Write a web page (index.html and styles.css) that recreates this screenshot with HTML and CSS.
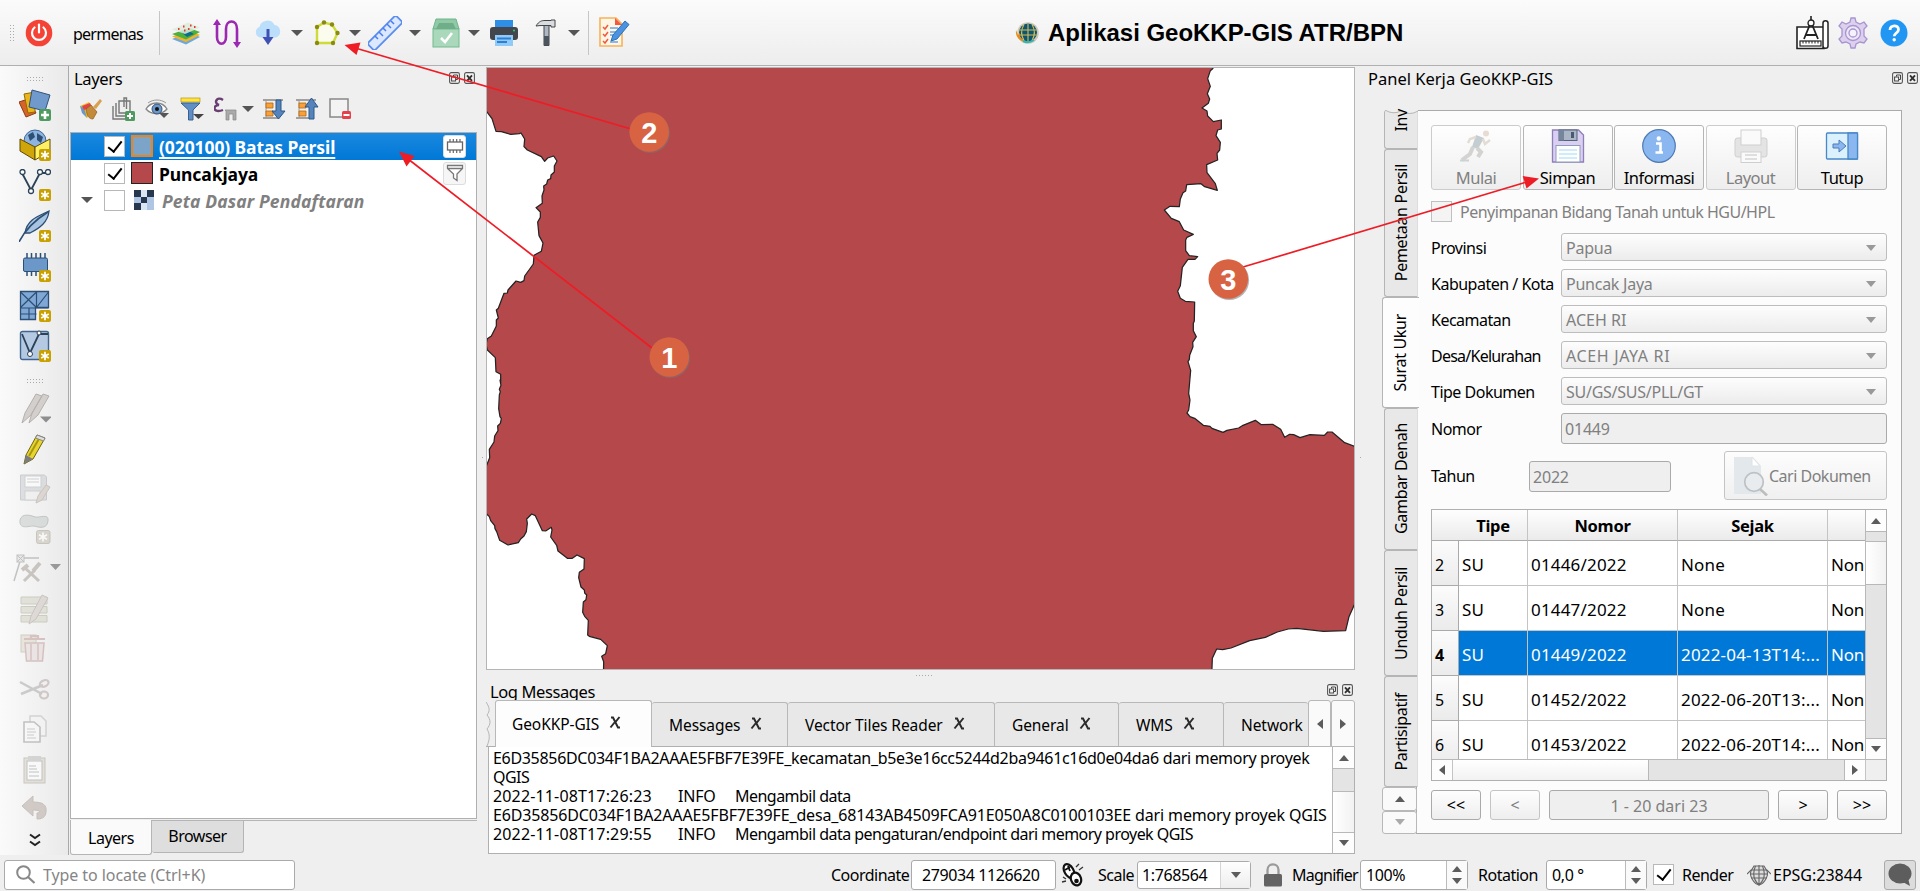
FILE: index.html
```
<!DOCTYPE html>
<html lang="id">
<head>
<meta charset="utf-8">
<title>Aplikasi GeoKKP-GIS ATR/BPN</title>
<link rel="stylesheet" href="styles.css">
</head>
<body>
<svg class="defs" width="0" height="0">
  <defs>
    <symbol id="float" viewBox="0 0 11 12"><rect x=".6" y=".6" width="9.8" height="10.8" rx="1.6" fill="#f4f4f4" stroke="#555" stroke-width="1.1"/><rect x="2.6" y="5" width="4" height="4" fill="none" stroke="#444"/><path d="M4.500 4.500V3h4v4.500H7" fill="none" stroke="#444"/></symbol>
    <symbol id="close" viewBox="0 0 11 12"><rect x=".6" y=".6" width="9.8" height="10.8" rx="1.6" fill="#f4f4f4" stroke="#555" stroke-width="1.1"/><path d="M3 3.300l5 5.500M8 3.300l-5 5.500" stroke="#333" stroke-width="1.900"/></symbol>
    <symbol id="star" viewBox="0 0 12 12"><rect width="12" height="12" rx="2" fill="#c8a000"/><path d="M6 1.800v8.400M2.200 4l7.600 4M9.800 4l-7.600 4" stroke="#fff" stroke-width="1.700"/></symbol>
    <symbol id="tabx" viewBox="0 0 12 13"><path d="M1.500 11.500L5.500 6.500M2 1.500h2l5 10h2M10.500 1L6.500 6" fill="none" stroke="#2b2b2b" stroke-width="2"/></symbol>
  </defs>
</svg>

<header class="topbar">
  <i class="grip-v"></i>
  <svg class="i-power" width="28" height="28" viewBox="0 0 28 28"><circle cx="14" cy="14" r="13.300" fill="#f44336"/><path d="M9.500 8.500a7 7 0 1 0 9 0" fill="none" stroke="#fff" stroke-width="2.200" stroke-linecap="round"/><path d="M14 5.500v8" stroke="#fff" stroke-width="2.200" stroke-linecap="round"/></svg>
  <span class="user">permenas</span>
  <i class="sep"></i>
  <svg class="i-map" width="30" height="24" viewBox="0 0 30 24"><path d="M1 18l14 5.500L29 16l-11-5z" fill="#6fa8dc"/><path d="M1 15.500l14 5.500 14-7-11-5z" fill="#f0b429"/><path d="M1 13l14 5.500 14-7.500-11-4z" fill="#4caf3e"/><path d="M10 11l8-1 5 3-7 3z" fill="#0d6e8c"/><path d="M1 8.500l13 4.500 15-6.500L17 1.500z" fill="#dcebdc" opacity=".85"/><path d="M7 8h1.500M12 5.500h1.500M17 8h1.500M19 4.500h1.500M23 6h1.500M13 9.500h1.500" stroke="#e23b2e" stroke-width="2"/></svg>
  <svg class="i-snake" width="30" height="30" viewBox="0 0 30 30"><path d="M5 5v14c0 9 9 9 9 0V11c0-10 11-10 11 0v14" fill="none" stroke="#9c27b0" stroke-width="2.600"/><path d="M1 7l4-6 4 6zM21 24h8l-4 6z" fill="#9c27b0"/></svg>
  <svg class="i-cloud" width="28" height="26" viewBox="0 0 28 26"><path d="M6 17.500a5.500 5.500 0 0 1-.5-10.500 8 8 0 0 1 15-2 6.500 6.500 0 0 1 1.500 12.500z" fill="#bbdefb"/><path d="M14 9v9" stroke="#3f51b5" stroke-width="3"/><path d="M8.500 17h11L14 25z" fill="#3f51b5"/></svg>
  <i class="dd"></i>
  <svg class="i-poly" width="26" height="26" viewBox="0 0 26 26"><path d="M3 23V7l7-4.500 8 2 5.500 8.500L19 23z" fill="#fbfbee" stroke="#cddc39" stroke-width="2.400"/><g fill="#8a8a10"><circle cx="3" cy="7" r="2.200"/><circle cx="10" cy="2.500" r="2.200"/><circle cx="18" cy="4.500" r="2.200"/><circle cx="23.500" cy="13" r="2.200"/><circle cx="19" cy="23" r="2.200"/><circle cx="3" cy="23" r="2.200"/></g></svg>
  <i class="dd"></i>
  <svg class="i-ruler" width="34" height="34" viewBox="0 0 34 34"><rect x="-3" y="12" width="40" height="10" rx="2" transform="rotate(-45 17 17)" fill="#dbe8ff" stroke="#5b8def" stroke-width="1.800"/><path d="M7 20l3 3M11 16l4 4M15 12l3 3M19 8l4 4M23 5l3 3" stroke="#4a7df0" stroke-width="1.500"/></svg>
  <i class="dd"></i>
  <svg class="i-box" width="28" height="30" viewBox="0 0 28 30"><path d="M4 1h20l3 10H1z" fill="#8fc9a6" stroke="#6fb58b"/><rect x="1" y="11" width="26" height="18" fill="#a9d8bb" stroke="#74b98f"/><path d="M4 11h20l-3-6H7z" fill="#6fae88"/><path d="M9 20l4 4 7-9" fill="none" stroke="#fff" stroke-width="2.600"/></svg>
  <i class="dd"></i>
  <svg class="i-print" width="28" height="26" viewBox="0 0 28 26"><rect x="5" y="0" width="18" height="9" fill="#2f8fe6"/><rect x="0" y="7" width="28" height="13" rx="3" fill="#43474d"/><circle cx="24" cy="10.500" r="1" fill="#29d07a"/><rect x="5" y="15" width="18" height="11" fill="#90caf9"/><path d="M7 18.500h14M7 22h10" stroke="#2f7fd0" stroke-width="1.800"/></svg>
  <svg class="i-hammer" width="22" height="28" viewBox="0 0 22 28"><path d="M9 6h5v20.500h-5z" fill="#aeb8c4" stroke="#444"/><path d="M9 17h5v9.500h-5z" fill="#4b5560"/><path d="M1 7c3-5 6-5.500 9-5.500h6V1h4v7h-4V6.500h-7c-3 0-5 0-8 .5z" fill="#d9dde2" stroke="#444"/></svg>
  <i class="dd"></i>
  <i class="sep"></i>
  <svg class="i-edit" width="31" height="31" viewBox="0 0 31 31"><path d="M1 1h16l6 6v22H1z" fill="#fff6e6" stroke="#f7b25a" stroke-width="1.600"/><path d="M16 1v7h7z" fill="#f2593f"/><path d="M4 10l2 2 3-4M4 17l2 2 3-4M4 24l2 2 3-4" fill="none" stroke="#f2593f" stroke-width="1.500"/><path d="M11 11h8M11 15h7M11 18h5M11 25h8" stroke="#6aa2e0" stroke-width="1.400"/><path d="M12 24l2-6L26 4l4 3.500L18 22z" fill="#4b93e0" stroke="#2d6fb8"/></svg>
  <div class="brand">
    <svg width="24" height="24" viewBox="0 0 24 24"><circle cx="13" cy="12" r="10.800" fill="#cfcbbb"/><circle cx="13" cy="11.500" r="9" fill="#0d5570"/><path d="M13 2.500v18M4.500 9h17M4.500 14h17M9 3.500c-3 5-3 11 0 16M17 3.500c3 5 3 11 0 16" fill="none" stroke="#d9bd52" stroke-width="1.100"/><path d="M1 9c-1 8 5 12 10 12-4-2-7-5-6-9l-2 2z" fill="#e98a1b"/><path d="M8 20c4 2 8 1 11-1" stroke="#36b5b0" stroke-width="2" fill="none"/></svg>
    <h1>Aplikasi GeoKKP-GIS ATR/BPN</h1>
  </div>
  <svg class="i-draft" width="33" height="34" viewBox="0 0 33 34"><path d="M1 11h27v21.500H1z" fill="#fff" stroke="#222" stroke-width="1.600"/><path d="M27 32.500V7c0-3 5-3 5 0v23c0 3-5 3-5 0" fill="#fff" stroke="#222" stroke-width="1.500"/><path d="M15 6L8 23M15 6l7 17M10 19h10" fill="none" stroke="#222" stroke-width="1.800"/><circle cx="15" cy="7" r="3" fill="#fff" stroke="#222" stroke-width="1.300"/><path d="M15 0v4" stroke="#222" stroke-width="1.600"/><rect x="4" y="25" width="21" height="5" fill="#fff" stroke="#222" stroke-width="1.200"/><path d="M7 25v2.500M10 25v2.500M13 25v2.500M16 25v2.500M19 25v2.500M22 25v2.500" stroke="#222"/></svg>
  <svg class="i-gear" width="30" height="32" viewBox="0 0 30 32"><path d="M13 1h4l1 4 4 2 4-2 3 4-3 3v7l3 3-3 4-4-1-4 2-1 4h-4l-1-4-4-2-4 1-3-4 3-3v-7L1 9l3-4 4 2 4-2z" fill="#dcd0ee" stroke="#a795cf" stroke-width="1.300"/><circle cx="15" cy="16" r="7.500" fill="#eee8f8" stroke="#a795cf" stroke-width="1.300"/><circle cx="15" cy="16" r="4" fill="#f6f2fc" stroke="#a795cf" stroke-width="1.300"/></svg>
  <svg class="i-help" width="28" height="28" viewBox="0 0 28 28"><circle cx="14" cy="14" r="13.500" fill="#2196f3"/><path d="M10 11c0-5.500 8.500-5.500 8.500-.5 0 3.500-4.300 3.500-4.300 6.800" fill="none" stroke="#fff" stroke-width="2.800"/><circle cx="14.200" cy="20.800" r="1.700" fill="#fff"/></svg>
</header>

<main class="work">
  <nav class="tools">
    <i class="grip-h"></i>
    <svg width="32" height="32" viewBox="0 0 32 32"><path d="M0 13l9-3 8 14-10 4z" fill="#d9622b" stroke="#8e3b14"/><path d="M5 5l11-2v20L9 24z" fill="#e8b61c" stroke="#8f6d00"/><path d="M13 1l18 5-5 16-16-4z" fill="#6f9acb" stroke="#32527a"/><rect x="20" y="20" width="12" height="12" rx="2" fill="#4e9a5f"/><path d="M26 22v8M22 26h8" stroke="#fff" stroke-width="2.600"/></svg>
    <svg width="32" height="32" viewBox="0 0 32 32"><circle cx="16" cy="12" r="11" fill="#8db3df" stroke="#3f6796"/><path d="M9 6l5-3 2 5-5 4zM18 4l6 4-2 6-4-3z" fill="#2d4e75"/><path d="M1 10l15 8v13L1 22z" fill="#d0a50a" stroke="#5f4a00"/><path d="M31 10l-15 8v13l15-9z" fill="#fff066" stroke="#5f4a00"/><use href="#star" x="20" y="20" width="12" height="12"/></svg>
    <svg width="32" height="32" viewBox="0 0 32 32"><path d="M3 4l9 17 9-17h8" fill="none" stroke="#2c4258" stroke-width="1.800"/><g fill="#fff" stroke="#2c4258" stroke-width="1.300"><circle cx="3.500" cy="3" r="2.500"/><circle cx="12" cy="22" r="2.500"/><circle cx="21" cy="3" r="2.500"/><circle cx="29" cy="3" r="2.500"/></g><use href="#star" x="20" y="20" width="12" height="12"/></svg>
    <svg width="32" height="32" viewBox="0 0 32 32"><path d="M6 23C8 9 20 6 30 1c-1 11-9 17-19 22z" fill="#a8c4e3" stroke="#2c4f74" stroke-width="1.300"/><path d="M0 32C6 20 16 10 29 2" fill="none" stroke="#2c4f74" stroke-width="1.600"/><use href="#star" x="20" y="20" width="12" height="12"/></svg>
    <svg width="32" height="32" viewBox="0 0 32 32"><path d="M8 3v5M12.500 3v5M17 3v5M21.500 3v5M26 3v5M8 21v5M12.500 21v5M17 21v5" stroke="#2c4f74" stroke-width="1.500"/><rect x="4.500" y="8" width="24" height="13.500" rx="1.500" fill="#6b97c9" stroke="#2c4f74"/><use href="#star" x="20" y="20" width="12" height="12"/></svg>
    <svg width="32" height="32" viewBox="0 0 32 32"><path d="M1.500 1.500h28v16h-13v12h-15z" fill="#80a8d6" stroke="#2c4f74" stroke-width="1.300"/><path d="M1.500 18h28M17.500 1.500v16M1.500 2l16 15.500M17.500 2l-16 15.500M29.500 2l-12 15.500M10 18v11.500M1.500 24h16" stroke="#2c4f74" stroke-width="1.200"/><use href="#star" x="20" y="20" width="12" height="12"/></svg>
    <svg width="32" height="32" viewBox="0 0 32 32"><rect x="1.500" y="1.500" width="28" height="28" rx="2" fill="#b5cae2" stroke="#41658e" stroke-width="1.400"/><path d="M3 4l8 19 9-19h9" fill="none" stroke="#2c4258" stroke-width="1.800"/><circle cx="11" cy="24" r="2.500" fill="#fff" stroke="#2c4258"/><circle cx="20" cy="3" r="2" fill="#fff" stroke="#2c4258"/><use href="#star" x="20" y="20" width="12" height="12"/></svg>
    <i class="grip-h second"></i>
    <svg class="pencils" width="32" height="32" viewBox="0 0 32 32"><path d="M3 31l3-10L17 2l6 2-11 19zM10 31l3-10L24 2l6 2-11 19z" fill="#d3cfcc" stroke="#b5b0ac"/><path d="M21 24.500h12l-6 6z" fill="#8e8e8e"/></svg>
    <svg width="32" height="32" viewBox="0 0 32 32"><path d="M5 31l2-9L18 2l8 3-12 21z" fill="#e8d42e" stroke="#6b6210"/><path d="M10 23L21 4" stroke="#a99713" stroke-width="2"/><path d="M5 31l2-9 7 4z" fill="#7d7d7d"/><path d="M18 2l8 3-1.500 3-8-3z" fill="#ddd" stroke="#888"/></svg>
    <svg class="off" width="32" height="32" viewBox="0 0 32 32"><path d="M1.500 2h24l2 2v23h-26z" fill="#c9cdd1" stroke="#a9adb1"/><rect x="6" y="3" width="16" height="11" fill="#fff" stroke="#b5b5b5"/><path d="M8 6h12M8 9h12" stroke="#b5b5b5"/><rect x="6" y="18" width="15" height="9" fill="#eee" stroke="#b5b5b5"/><path d="M17 30l2-7 8-11 4 2-8 13z" fill="#ccc0b8" stroke="#aaa099"/></svg>
    <svg class="off" width="32" height="32" viewBox="0 0 32 32"><path d="M1 7c2-7 10-5 15-3 5 1 14-4 13 4-1 9-10 6-14 5-6 0-15 4-14-6z" fill="#c4cbc8" stroke="#9aa09d"/><rect x="17.500" y="17.500" width="13.500" height="13" rx="2" fill="#c3bfb0" stroke="#a5a194"/><path d="M24 19.500v9M20 21.700l8 4.600M28 21.700l-8 4.600" stroke="#fff" stroke-width="1.700"/></svg>
    <svg class="off node" width="48" height="32" viewBox="0 0 48 32"><path d="M1 28L8 5h18" fill="none" stroke="#999" stroke-width="1.500"/><rect x="4" y="2" width="7" height="7" fill="#ddd" stroke="#999"/><path d="M4 2l7 7M11 2l-7 7" stroke="#999"/><path d="M11 28l11-11M12 15l14 13" stroke="#a69f97" stroke-width="3"/><path d="M20 18l7-8M9 17l6-5" stroke="#a69f97" stroke-width="4"/><path d="M37 11h11l-5.500 6z" fill="#555"/></svg>
    <svg class="off" width="32" height="32" viewBox="0 0 32 32"><path d="M2 4h26v7H2zM2 13.500h26v6.500H2zM2 22.500h26v6.500H2z" fill="#d3d3c3" stroke="#aeae9c"/><path d="M10 31l2-8L23 2l6 3-12 21z" fill="#cfc6c0" stroke="#a79f99"/></svg>
    <svg class="off" width="32" height="32" viewBox="0 0 32 32"><rect x="2" y="2" width="15" height="17" fill="#dcd9c8" stroke="#b3b09c"/><path d="M5 6h21M12 6V3h7v3" fill="none" stroke="#c39a9a" stroke-width="2.200"/><path d="M6 10h19l-1.500 18h-16z" fill="#e6d9d9" stroke="#bf9a9a" stroke-width="1.500"/><path d="M12 11v16M19 11v16" stroke="#bf9a9a" stroke-width="1.500"/></svg>
    <svg class="off" width="32" height="32" viewBox="0 0 32 32"><path d="M1 8l22 12M2 20l22-9" stroke="#aaa" stroke-width="2.500"/><ellipse cx="25" cy="9.500" rx="4.500" ry="3" transform="rotate(-25 25 9)" fill="none" stroke="#b9a5a5" stroke-width="2.200"/><ellipse cx="25" cy="21" rx="4" ry="3.500" fill="none" stroke="#b9a5a5" stroke-width="2.200"/></svg>
    <svg class="off" width="32" height="32" viewBox="0 0 32 32"><path d="M11 2h11l5 5v15H11z" fill="#f4f4f4" stroke="#bbb" stroke-width="1.500"/><path d="M5 8h10l6 5v15H5z" fill="#fafafa" stroke="#999" stroke-width="1.600"/><path d="M8 15h8M8 18h9M8 21h7M8 24h9" stroke="#aaa"/></svg>
    <svg class="off" width="32" height="32" viewBox="0 0 32 32"><rect x="5" y="4" width="21" height="25" fill="#d6d2c6" stroke="#a8a498"/><rect x="8" y="7" width="15" height="19" fill="#fff" stroke="#999"/><rect x="9" y="2" width="13" height="5" fill="#bbb"/><path d="M10 12h7M10 15h8M10 18h10M10 22h10" stroke="#999"/></svg>
    <svg class="off" width="32" height="32" viewBox="0 0 32 32"><path d="M3 12L14 2v6c10 0 14 3 13 10-.5 6-5 7-9 7v-6c4 0 4-3-4-3v6z" fill="#b6aaa2" stroke="#a3978f"/></svg>
    <svg class="more" width="12" height="14" viewBox="0 0 12 14"><path d="M1 1.500l5 3.500 5-3.500M1 8.500l5 3.500 5-3.500" fill="none" stroke="#222" stroke-width="2"/></svg>
  </nav>

  <section class="layers">
    <div class="dock-title"><span>Layers</span><b class="dock-btns"><svg width="11" height="12"><use href="#float"/></svg><svg width="11" height="12"><use href="#close"/></svg></b></div>
    <div class="layer-tools">
      <svg width="23" height="24" viewBox="0 0 23 24"><path d="M1 9l9-4 5 8-7 8z" fill="#f1c21b"/><path d="M1 9l4 2 3 10-5-5z" fill="#6b97c9"/><path d="M3 9l8-3 2 4-8 3z" fill="#e5414a"/><path d="M7 12l5-4 6 7-4 7c-4 0-6-3-7-10z" fill="#c38a3a" stroke="#8b5d1c" stroke-width=".7"/><path d="M14 10l7-8 2 2-6 8z" fill="#d9a050"/></svg>
      <svg width="23" height="24" viewBox="0 0 23 24"><path d="M1 9v13h13M4 6v13h13M7 4h11v12H7zM12 10V1h2.500v11" fill="none" stroke="#777" stroke-width="1.400"/><rect x="13" y="14" width="10" height="10" rx="1.500" fill="#4e9a5f"/><path d="M18 16v6M15 19h6" stroke="#fff" stroke-width="2"/></svg>
      <svg width="25" height="24" viewBox="0 0 25 24"><path d="M1 12C6 4 17 4 22 12c-5 6-16 6-21 0z" fill="#fff" stroke="#888" stroke-width="1.300"/><circle cx="12" cy="12" r="5" fill="#6b97c9" stroke="#34557c"/><circle cx="12" cy="12" r="2" fill="#111"/><path d="M3 6C8 2 16 2 21 6" stroke="#999" fill="none"/><path d="M14 16h10l-5 5z" fill="#555"/></svg>
      <svg width="24" height="24" viewBox="0 0 24 24"><rect x="1" y="1" width="19" height="4" fill="#ffe14a" stroke="#b79a00" stroke-width=".7"/><path d="M1 6h19l-7 7v10H8.500V13z" fill="#5f8fc6" stroke="#36628f"/><path d="M13 17h11l-5.500 5z" fill="#444"/></svg>
      <svg width="23" height="25" viewBox="0 0 23 25"><path d="M9 3C3-1-1 6 5 8-2 8-1 17 9 13" fill="none" stroke="#6a3e73" stroke-width="2.400"/><path d="M11 13h11v10h-3v-6h-4v6h-3v-9z" fill="#aaa" stroke="#888" stroke-width=".7"/></svg>
      <i class="dd small"></i>
      <svg width="23" height="24" viewBox="0 0 23 24"><path d="M0 3h20M0 21h16" stroke="#888" stroke-width="1.500"/><path d="M3 3v18" stroke="#999"/><path d="M3 6h7v5H3zM3 14h7v5H3z" fill="#f6a13a" stroke="#b9650d" stroke-width=".8"/><path d="M13 3h5v11h4l-6.500 8L9 14h4z" fill="#5584bd" stroke="#2d5688"/></svg>
      <svg width="23" height="24" viewBox="0 0 23 24"><path d="M0 3h20M0 21h16" stroke="#888" stroke-width="1.500"/><path d="M3 3v18" stroke="#999"/><path d="M3 6h7v5H3zM3 14h7v5H3z" fill="#f6a13a" stroke="#b9650d" stroke-width=".8"/><path d="M13 22h5V10h4l-6.500-9L9 10h4z" fill="#5584bd" stroke="#2d5688"/></svg>
      <svg width="22" height="24" viewBox="0 0 22 24"><rect x="1" y="2" width="18" height="18" fill="#f3f3f3" stroke="#888" stroke-width="1.500"/><rect x="13" y="14" width="9" height="8" rx="1.500" fill="#e3414d"/><path d="M14.500 18h6" stroke="#fff" stroke-width="2"/></svg>
    </div>
    <div class="tree">
      <div class="row sel"><i class="exp"></i><i class="chk on"></i><i class="sw blue"></i><span>(020100) Batas Persil</span><b class="badge on"><svg width="18" height="18" viewBox="0 0 18 18"><path d="M4 2v3M7.300 2v3M10.700 2v3M14 2v3M4 13v3M7.300 13v3M10.700 13v3M14 13v3" stroke="#666" stroke-width="1.200"/><rect x="1.500" y="5" width="15" height="8" fill="#fff" stroke="#666" stroke-width="1.300"/></svg></b></div>
      <div class="row"><i class="exp"></i><i class="chk on"></i><i class="sw red"></i><span>Puncakjaya</span><b class="badge"><svg width="18" height="18" viewBox="0 0 18 18"><path d="M1.500 1.500h15v3L11 10v6.500L7.500 14v-4L1.500 4.500zM1.500 4.500h15" fill="#fff" stroke="#777" stroke-width="1.300"/></svg></b></div>
      <div class="row group"><i class="exp open"></i><i class="chk"></i><svg class="tiles" width="20" height="20" viewBox="0 0 20 20"><path fill="#aec6e3" d="M0 0h20v20H0z"/><path fill="#27374f" d="M0 0h7v7H0zM13 0h7v7h-7zM7 7h6v6H7zM0 13h7v7H0z"/><path fill="#dbe6f3" d="M7 0h6v7H7zM7 13h6v7H7z"/></svg><span>Peta Dasar Pendaftaran</span></div>
    </div>
    <div class="dock-tabs"><span class="t on">Layers</span><span class="t">Browser</span></div>
  </section>

  <i class="split-v"></i>

  <section class="center">
    <div class="canvas">
      <svg width="867" height="601" viewBox="487 68 867 601">
        <g fill="#fff" stroke="#232323" stroke-width="3.700" stroke-linejoin="round">
          <polygon transform="translate(480 60) scale(.33333)" points="0,140 20,155 36,176 48,214 64,215 92,223 118,221 123,219 134,237 132,260 142,270 184,290 194,304 203,294 221,288 231,303 223,318 223,336 213,345 212,356 203,360 200,372 191,378 192,390 186,408 187,430 168,443 181,456 181,472 173,486 177,527 189,549 184,574 162,586 160,612 134,648 132,662 122,667 108,663 84,690 82,699 72,700 55,745 49,750 55,774 49,780 49,798 34,828 22,836 18,853 22,870 46,893 48,935 62,943 62,972 60,960 63,976 58,988 61,995 58,1005 56,1046 60,1070 64,1076 61,1090 53,1098 54,1112 44,1128 42,1146 28,1168 29,1193 20,1216 0,1230"/>
          <polygon transform="translate(480 380) scale(.33333)" points="0,385 20,402 28,410 32,422 44,437 45,446 50,455 59,481 84,495 115,488 122,477 132,468 139,455 142,430 140,417 155,402 166,407 187,452 197,453 214,442 216,450 212,471 230,496 234,513 262,535 277,535 291,525 313,536 312,567 298,577 296,593 303,621 313,630 314,639 320,645 318,659 310,666 308,697 314,709 325,721 323,765 328,769 362,778 382,797 377,821 365,829 371,845 370,900 0,900"/>
          <polygon transform="translate(1000 0) scale(.33333)" points="648,190 638,206 631,212 623,236 631,259 622,281 629,297 625,310 606,324 621,333 623,348 640,365 664,360 664,387 653,390 648,407 661,427 659,450 651,460 653,480 620,494 621,518 646,551 652,571 614,560 603,551 560,554 557,573 549,578 541,597 538,620 510,619 493,630 514,655 538,665 551,690 580,703 561,712 557,720 557,752 568,767 593,770 585,778 564,778 547,802 541,857 533,874 541,895 556,904 584,906 583,963 580,970 580,992 589,1010 578,1027 579,1040 569,1066 568,1078 564,1085 572,1111 566,1180 570,1200 566,1230 561,1239 570,1250 584,1255 610,1276 630,1279 636,1285 669,1297 681,1291 716,1284 729,1276 766,1261 784,1274 818,1273 842,1288 854,1312 869,1303 881,1304 900,1313 930,1304 973,1306 983,1296 996,1296 1034,1328 1070,1341 1100,1341 1100,190"/>
          <polygon transform="translate(1150 330) scale(.33333)" points="640,780 613,824 597,860 587,902 520,904 440,895 415,897 382,906 346,922 299,932 243,954 218,959 200,957 187,985 185,1040 660,1040"/>
        </g>
      </svg>
    </div>
    <i class="split-h"></i>
    <div class="dock-title log"><span>Log Messages</span><b class="dock-btns"><svg width="11" height="12"><use href="#float"/></svg><svg width="11" height="12"><use href="#close"/></svg></b></div>
    <div class="log-tabs">
      <svg class="torn" width="9" height="44" viewBox="0 0 9 44"><path d="M0 0c4 6 4 9 1 13 4 5 4 9 0 14 3 5 3 10 0 17" fill="none" stroke="#b5b5b5"/></svg>
      <span class="lt on w1">GeoKKP-GIS<svg width="12" height="13"><use href="#tabx"/></svg></span>
      <span class="lt w2">Messages<svg width="12" height="13"><use href="#tabx"/></svg></span>
      <span class="lt w3">Vector Tiles Reader<svg width="12" height="13"><use href="#tabx"/></svg></span>
      <span class="lt w4">General<svg width="12" height="13"><use href="#tabx"/></svg></span>
      <span class="lt w5">WMS<svg width="12" height="13"><use href="#tabx"/></svg></span>
      <span class="lt w6">Network</span>
      <span class="sb"><i class="ar left"></i></span><span class="sb"><i class="ar right"></i></span>
    </div>
    <div class="log-body">
      <div class="log-text">
        <p class="k1">E6D35856DC034F1BA2AAAE5FBF7E39FE_kecamatan_b5e3e16cc5244d2ba9461c16d0e04da6 dari memory proyek</p>
        <p>QGIS</p>
        <p><span class="ts">2022-11-08T17:26:23</span><span class="lv">INFO</span>Mengambil data</p>
        <p class="k2">E6D35856DC034F1BA2AAAE5FBF7E39FE_desa_68143AB4509FCA91E050A8C0100103EE dari memory proyek QGIS</p>
        <p><span class="ts">2022-11-08T17:29:55</span><span class="lv">INFO</span>Mengambil data pengaturan/endpoint dari memory proyek QGIS</p>
      </div>
      <div class="vbar"><b><i class="ar up"></i></b><s></s><u></u><b><i class="ar down"></i></b></div>
    </div>
  </section>

  <i class="split-v right"></i>

  <section class="panel">
    <div class="dock-title"><span>Panel Kerja GeoKKP-GIS</span><b class="dock-btns"><svg width="11" height="12"><use href="#float"/></svg><svg width="11" height="12"><use href="#close"/></svg></b></div>
    <div class="panel-body">
      <div class="side-tabs">
        <div class="st h1"><svg class="wave" width="33" height="5" viewBox="0 0 33 5"><path d="M0 0q8 5 16 1q9 5 17 0V0z" fill="#efefef"/><path d="M0 0q8 5 16 1q9 5 17 0" fill="none" stroke="#b5b5b5"/></svg><span>Inv</span></div>
        <div class="st h2"><span>Pemetaan Persil</span></div>
        <div class="st h3 on"><span>Surat Ukur</span></div>
        <div class="st h4"><span>Gambar Denah</span></div>
        <div class="st h5"><span>Unduh Persil</span></div>
        <div class="st h6"><span>Partisipatif</span></div>
        <div class="tb"><i class="ar up"></i></div>
        <div class="tb dim"><i class="ar down"></i></div>
      </div>
      <div class="frame">
        <div class="actions">
          <button class="act dim"><svg width="34" height="34" viewBox="0 0 34 34"><circle cx="27" cy="4.500" r="3" fill="#e6dcd2"/><path d="M17 6l8 3-6 11-6-2z" fill="#c4cdd0"/><path d="M17 8l-6 2-2 4M24 10l2 5 5-4" fill="none" stroke="#e2dcd5" stroke-width="2.500"/><path d="M14 18l-3 7-8 6M18 19l4 4-3 5" fill="none" stroke="#d3d3d2" stroke-width="4"/><path d="M1 31.500h9" stroke="#cdd3d5" stroke-width="2"/></svg><span>Mulai</span></button>
          <button class="act"><svg width="34" height="34" viewBox="0 0 34 34"><path d="M1.500 1h26l5 5v27h-31z" fill="#d9cff0" stroke="#8f7fb8" stroke-width="1.300"/><rect x="8" y="1" width="18" height="10.500" fill="#aab6c6" stroke="#55657c"/><path d="M8 1h5v10.500H8z" fill="#75859c"/><rect x="20" y="3" width="3" height="6" fill="#4a5870"/><rect x="5" y="16.500" width="24" height="16.500" fill="#fff" stroke="#8f9cc0"/><path d="M8 21h18M8 25h18M8 29h18" stroke="#bfe6fb" stroke-width="1.600"/></svg><span>Simpan</span></button>
          <button class="act"><svg width="34" height="34" viewBox="0 0 34 34"><circle cx="17" cy="17" r="16.300" fill="#8bb7f0" stroke="#4e7ab5" stroke-width="1.200"/><path d="M14 14.500h4.500v9H21M13.500 23.500h7" stroke="#fff" stroke-width="2.600" fill="none"/><circle cx="16.800" cy="9.500" r="2.200" fill="#fff"/></svg><span>Informasi</span></button>
          <button class="act dim"><svg width="34" height="34" viewBox="0 0 34 34"><rect x="1" y="9" width="32" height="19" rx="2.500" fill="#e4e4e4" stroke="#cfcfcf"/><rect x="7" y="1" width="20" height="15" fill="#fafafa" stroke="#cfcfcf"/><rect x="7" y="23" width="20" height="10.500" fill="#fafafa" stroke="#cfcfcf"/><path d="M11 26h12M11 30h12" stroke="#d5d5d5" stroke-width="1.300"/></svg><span>Layout</span></button>
          <button class="act"><svg width="34" height="34" viewBox="0 0 34 34"><rect x="1.500" y="4" width="31" height="26" rx="1" fill="#dcf1fe" stroke="#4788c7" stroke-width="1.300"/><path d="M23 4h9.500v26H23z" fill="#8bb7f0" stroke="#4788c7" stroke-width="1.300"/><path d="M8 15h6v-4l7 6-7 6v-4H8z" fill="#8bb7f0" stroke="#4e7ab5"/></svg><span>Tutup</span></button>
        </div>
        <label class="hgu"><i class="cb"></i><span>Penyimpanan Bidang Tanah untuk HGU/HPL</span></label>
        <div class="field"><span>Provinsi</span><div class="combo">Papua<i class="ar down"></i></div></div>
        <div class="field"><span>Kabupaten / Kota</span><div class="combo">Puncak Jaya<i class="ar down"></i></div></div>
        <div class="field"><span>Kecamatan</span><div class="combo c-kec">ACEH RI<i class="ar down"></i></div></div>
        <div class="field"><span class="f-desa">Desa/Kelurahan</span><div class="combo c-desa">ACEH JAYA RI<i class="ar down"></i></div></div>
        <div class="field"><span>Tipe Dokumen</span><div class="combo">SU/GS/SUS/PLL/GT<i class="ar down"></i></div></div>
        <div class="field nomor"><span>Nomor</span><div class="inp">01449</div></div>
        <div class="tahun"><span>Tahun</span><div class="inp">2022</div><button class="cari"><svg width="36" height="40" viewBox="0 0 36 40"><path d="M1 1h19l8 9v28H1z" fill="#e3e8ec"/><path d="M19 1v9h8z" fill="#fff" stroke="#dde3e8"/><circle cx="21" cy="26" r="9.300" fill="#e8ecef" stroke="#bdc1c4" stroke-width="1.700"/><path d="M27 33l7 6.500" stroke="#bdbdbd" stroke-width="2.600"/></svg>Cari Dokumen</button></div>
        <div class="grid">
          <div class="gmain">
            <div class="tr th"><b class="c1">Tipe</b><b class="c2">Nomor</b><b class="c3">Sejak</b><b class="c4"></b></div>
            <div class="tr"><i>2</i><span class="c1">SU</span><span class="c2">01446/2022</span><span class="c3">None</span><span class="c4">Non</span></div>
            <div class="tr"><i>3</i><span class="c1">SU</span><span class="c2">01447/2022</span><span class="c3">None</span><span class="c4">Non</span></div>
            <div class="tr sel"><i>4</i><span class="c1">SU</span><span class="c2">01449/2022</span><span class="c3">2022-04-13T14:...</span><span class="c4">Non</span></div>
            <div class="tr"><i>5</i><span class="c1">SU</span><span class="c2">01452/2022</span><span class="c3">2022-06-20T13:...</span><span class="c4">Non</span></div>
            <div class="tr"><i>6</i><span class="c1">SU</span><span class="c2">01453/2022</span><span class="c3">2022-06-20T14:...</span><span class="c4">Non</span></div>
          </div>
          <div class="vbar"><b><i class="ar up"></i></b><s></s><u></u><s class="rest"></s><b><i class="ar down"></i></b></div>
          <div class="hbar"><b><i class="ar left"></i></b><u></u><s></s><b><i class="ar right"></i></b></div>
        </div>
        <div class="pager"><button>&lt;&lt;</button><button class="dim">&lt;</button><div class="inp">1 - 20 dari 23</div><button>&gt;</button><button>&gt;&gt;</button></div>
      </div>
    </div>
  </section>
</main>

<footer class="status">
  <div class="locate"><svg width="20" height="20" viewBox="0 0 20 20"><circle cx="7.500" cy="7.500" r="6.300" fill="none" stroke="#888" stroke-width="2"/><path d="M12 12l6.500 6" stroke="#888" stroke-width="2.200"/></svg>Type to locate (Ctrl+K)</div>
  <span class="l-coord">Coordinate</span>
  <div class="box coord">279034 1126620</div>
  <svg class="i-toggle" width="24" height="24" viewBox="0 0 24 24"><ellipse cx="8" cy="8" rx="4.500" ry="7.500" transform="rotate(-30 8 8)" fill="#fff" stroke="#111" stroke-width="2.200"/><path d="M4 7l5-3M7 3l2 5" stroke="#111" stroke-width="1.800"/><ellipse cx="15" cy="16" rx="5" ry="6.500" transform="rotate(-20 15 16)" fill="#fff" stroke="#111" stroke-width="2.200"/><circle cx="15.500" cy="18" r="2.300" fill="#111"/><path d="M2 14l3 2M1 19l4-1M15 4l3-3M18 7l4-3" stroke="#333" stroke-width="1.300"/></svg>
  <span class="l-scale">Scale</span>
  <div class="box scale"><span>1:768564</span><b><i class="ar down"></i></b></div>
  <svg class="i-lock" width="20" height="24" viewBox="0 0 20 24"><path d="M4.500 12V7c0-7.500 11-7.500 11 0v5" fill="none" stroke="#9a9a9a" stroke-width="2.300"/><rect x="1" y="11" width="18" height="12.500" rx="1.500" fill="#636363"/></svg>
  <span class="l-mag">Magnifier</span>
  <div class="box spin m"><span>100%</span><b><i class="ar up"></i><i class="ar down"></i></b></div>
  <span class="l-rot">Rotation</span>
  <div class="box spin r"><span>0,0 °</span><b><i class="ar up"></i><i class="ar down"></i></b></div>
  <i class="chk on"></i>
  <span class="l-ren">Render</span>
  <svg class="i-globe" width="24" height="22" viewBox="0 0 24 22"><path d="M7 2h10l3 5c2 5-3 13-8 14C7 20 2 12 4 7z" fill="#ddd" stroke="#666" stroke-width="1.100"/><path d="M0 10l4-4h16l4 4M3 10h18M4 14h16M12 1v20M8.500 2c-3 7-2 14 3.500 19 5.500-5 6.500-12 3.500-19" fill="none" stroke="#666" stroke-width="1.100"/></svg>
  <span class="l-epsg">EPSG:23844</span>
  <div class="msg"><svg width="24" height="24" viewBox="0 0 24 24"><ellipse cx="12" cy="10.500" rx="11.500" ry="10" fill="#5d5d5d"/><path d="M13 18l7-3 2 8z" fill="#5d5d5d"/></svg></div>
</footer>

<svg class="notes" width="1920" height="891" viewBox="0 0 1920 891">
  <g stroke="#ee1c25" stroke-width="1.700"><path d="M631 129L357 48.500"/><path d="M652 348L410 160.500"/><path d="M1243 267L1525 182.500"/></g>
  <g fill="#ee1c25"><path d="M344.500 45l16-2.500-4 12.500z"/><path d="M399 151.500l15.500 4.500-8 10.500z"/><path d="M1539 178.500l-12.500 10-3.800-12.500z"/></g>
  <g fill="#777" opacity=".55"><circle cx="670.300" cy="358.300" r="19.800"/><circle cx="650.300" cy="133.300" r="19.800"/><circle cx="1229.300" cy="280.300" r="19.800"/></g>
  <g fill="#d86343"><circle cx="669.300" cy="357" r="19.800"/><circle cx="649.200" cy="132" r="19.800"/><circle cx="1228.300" cy="279" r="19.800"/></g>
  <g class="num"><text x="669.300" y="367.500">1</text><text x="649.200" y="142.500">2</text><text x="1228.300" y="289.500">3</text></g>
</svg>
</body>
</html>
```
FILE: styles.css
```
* { box-sizing: border-box; }
body {
  margin: 0; width: 1920px; height: 891px; overflow: hidden; position: relative;
  display: flex; flex-direction: column; background: #efefef; color: #000;
  font: 16px/20px "Noto Sans", "DejaVu Sans Condensed", sans-serif; letter-spacing: -0.5px; white-space: nowrap;
}
i, b, s, u { display: block; font-style: normal; text-decoration: none; flex: none; }
svg { display: block; flex: none; }
p { margin: 0; }
button { font: inherit; letter-spacing: inherit; color: inherit; padding: 0; margin: 0; }
.defs { position: absolute; }

/* shared arrows */
.ar { width: 0; height: 0; border: 0 solid transparent; }
.ar.down { border-width: 6px 5.500px 0; border-top-color: #5c5c5c; }
.ar.up { border-width: 0 5.500px 6px; border-bottom-color: #5c5c5c; }
.ar.left { border-width: 5.500px 6px 5.500px 0; border-right-color: #5c5c5c; }
.ar.right { border-width: 5.500px 0 5.500px 6px; border-left-color: #5c5c5c; }
.dd { width: 0; height: 0; border: 6px solid transparent; border-top-color: #555; border-bottom: 0; }

/* top bar */
.topbar { height: 66px; flex: none; display: flex; align-items: center; padding-left: 9px; background: linear-gradient(#fbfbfb, #ededed); border-bottom: 1px solid #b0b0b0; }
.topbar .grip-v { width: 5px; height: 18px; background: radial-gradient(circle, #aaa 0.700px, transparent 1px) 0 0/3px 3px; }
.sep { width: 1px; height: 44px; background: #c6c6c6; }
.i-power { margin-left: 11px; }
.user { margin: 3px 0 0 20px; width: 86px; letter-spacing: -0.750px; }
.i-map { margin-left: 11px; }
.i-snake { margin-left: 11px; }
.i-cloud { margin-left: 12px; }
.i-cloud + .dd { margin-left: 9px; }
.i-poly { margin-left: 11px; }
.i-poly + .dd { margin-left: 9px; }
.i-ruler { margin-left: 7px; }
.i-ruler + .dd { margin-left: 7px; }
.i-box { margin-left: 11px; }
.i-box + .dd { margin-left: 8px; }
.i-print { margin-left: 10px; }
.i-hammer { margin-left: 17px; }
.i-hammer + .dd { margin-left: 11px; }
.i-hammer ~ .sep { margin-left: 8px; }
.i-edit { margin-left: 10px; }
.brand { margin-left: 385px; width: 781px; display: flex; align-items: center; gap: 9px; }
.brand h1 { margin: 0; font: bold 24px/30px "Liberation Sans", Arial, sans-serif; letter-spacing: -0.030px; }
.i-gear { margin-left: 9px; }
.i-help { margin-left: 12px; }

.work { height: 789px; flex: none; display: flex; }

/* vertical toolbar */
.tools { width: 69px; height: 789px; border-right: 1px solid #aaa; background: linear-gradient(90deg, #fafafa, #eaeaea); display: flex; flex-direction: column; align-items: center; gap: 8px; padding: 10px 0 0 2px; }
.tools svg { height: 32px; margin-bottom: 0.200px; }
.grip-h { width: 18px; height: 5px; background: radial-gradient(circle, #aaa 0.700px, transparent 1px) 0 0/3px 3px; }
.grip-h.second { margin: 8px 0 1px; }
.off { opacity: .55; }
.node { margin-left: 4px; }
.tools .more { height: 14px; margin-top: -1px; }

/* docks */
.dock-title { height: 27px; display: flex; align-items: center; justify-content: space-between; font-size: 16.500px; padding-left: 5px; }
.dock-title span { line-height: 22px; }
.dock-btns { display: flex; gap: 4px; margin-top: -2px; }
.layers { width: 408px; height: 789px; padding-left: 1px; display: flex; flex-direction: column; }
.layers .dock-title { padding: 0 2px 1px 4px; letter-spacing: -0.350px; }
.layer-tools { height: 39px; display: flex; align-items: center; padding: 0 0 6px 9px; gap: 9.900px; }
.dd.small { border-width: 6px 6px 0; margin-left: -4px; margin-right: -1px; }
.tree { height: 688px; background: #fff; border: 1px solid #b0b0b0; }
.row { height: 27px; display: flex; align-items: center; padding: 0 10px 0 10px; font-weight: bold; }
.row.sel { background: linear-gradient(#1a88de, #0078d7); color: #fff; }
.row.sel span { text-decoration: underline; text-decoration-thickness: 1.500px; text-underline-offset: 3px; }
.exp { width: 23px; }
.exp.open { width: 0; height: 0; border: 6px solid transparent; border-top-color: #555; border-bottom: 0; margin-right: 11px; }
.chk { width: 21px; height: 21px; border: 1px solid #b8b8b8; background: #fff; position: relative; flex: none; }
.chk.on::after { content: ""; position: absolute; left: 6px; top: 1px; width: 6px; height: 12px; border: solid #000; border-width: 0 2.500px 2.500px 0; transform: rotate(38deg); }
.sw { width: 22px; height: 22px; margin-left: 6px; }
.sw.blue { background: #7ca3c8; border: 2px solid #f5820f; }
.sw.red { background: #b5484b; border: 1px solid #232323; }
.row span { margin-left: 6px; flex: 1; letter-spacing: -0.100px; font-size: 17.500px; padding-top: 1px; }
.row.group span { font-style: italic; color: #808080; margin-left: 8px; letter-spacing: 0.150px; }
.tiles { margin-left: 9px; }
.badge { width: 23px; height: 23px; border: 1px solid #ddd; border-radius: 3px; background: #f6f6f6; display: flex; align-items: center; justify-content: center; }
.badge.on { background: #fff; }
.dock-tabs { height: 35px; margin-top: 1px; display: flex; align-items: flex-start; border-top: 1px solid #b5b5b5; }
.dock-tabs .t { height: 32px; width: 92px; border: 1px solid #b5b5b5; border-width: 0 1px 1px 0; border-radius: 0 0 3px 3px; background: #dedede; text-align: center; line-height: 31px; }
.dock-tabs .t.on { margin-top: -1px; height: 35px; width: 82px; background: #fafafa; border-left-width: 1px; line-height: 36px; }

.split-v { width: 9px; height: 789px; background: radial-gradient(circle, #aaa 0.700px, transparent 1px) 4px 390px/3px 3px no-repeat; }

/* map + log */
.center { width: 869px; height: 789px; display: flex; flex-direction: column; }
.canvas { height: 603px; margin-top: 1px; border: 1px solid #b5b5b5; background: #b5484b; overflow: hidden; flex: none; }
.split-h { width: 18px; height: 3px; margin: 4px 0 4px 429px; background: radial-gradient(circle, #aaa 0.700px, transparent 1px) 0 0/3px 3px; }
.dock-title.log { height: 19px; padding: 2px 2px 0 4px; margin-bottom: 0; flex: none; letter-spacing: -0.400px; }
.dock-title.log .dock-btns { margin-top: -4px; }
.log-tabs { height: 47px; display: flex; align-items: flex-end; border-bottom: 1px solid #b0b0b0; flex: none; }
.lt { height: 44px; display: flex; align-items: center; gap: 10px; padding-left: 17px; background: #e8e8e8; border: 1px solid #b8b8b8; border-width: 1px 1px 0 0; border-radius: 3px 3px 0 0; flex: none; font-size: 15.500px; letter-spacing: -0.080px; }
.lt.on { height: 47px; background: #fdfdfd; border-left-width: 1px; margin-bottom: -1px; padding-left: 16px; }
.w1 { width: 157px; } .w2 { width: 136px; } .w3 { width: 207px; } .w4 { width: 124px; } .w5 { width: 105px; } .w6 { width: 84px; border-right: 0; }
.lt svg { margin-top: -3px; }
.sb { width: 23px; height: 47px; margin-bottom: -1px; border: 1px solid #b8b8b8; background: #fafafa; border-radius: 3px 3px 0 0; display: flex; align-items: center; justify-content: center; }
.sb + .sb { width: 24px; margin-left: 0; }
.log-body { height: 107px; margin-left: 2px; border: 1px solid #b0b0b0; border-top: 0; background: #fff; display: flex; }
.log-text { flex: 1; min-width: 0; padding: 1px 0 0 4px; line-height: 19px; }
.log-text p { display: flex; height: 19px; line-height: 20px; letter-spacing: -0.530px; }
.log-text .k1 { letter-spacing: -0.315px; }
.log-text .k2 { letter-spacing: -0.150px; }
.ts { width: 185px; letter-spacing: 0.150px; } .lv { width: 57px; letter-spacing: -0.200px; }
.vbar { width: 22px; display: flex; flex-direction: column; border-left: 1px solid #b8b8b8; flex: none; }
.vbar b { height: 21px; background: #fdfdfd; display: flex; align-items: center; justify-content: center; }
.vbar s { height: 24px; background: #e4e4e4; border-top: 1px solid #b8b8b8; border-bottom: 1px solid #b8b8b8; }
.vbar u { flex: 1; background: linear-gradient(90deg, #fff, #f2f2f2); }
.vbar b:last-child { border-top: 1px solid #b8b8b8; }

/* work panel */
.panel { width: 556px; height: 789px; padding-left: 0; }
.panel .dock-title { padding: 0 2px 2px 4px; letter-spacing: 0; }
.panel-body { margin: 17px 0 0 18px; display: flex; height: 724px; }
.side-tabs { width: 37px; flex: none; position: relative; z-index: 1; }
.st { margin-left: 2px; width: 34px; border: 1px solid #b5b5b5; border-right-color: #ddd; border-radius: 3px 0 0 3px; background: #e8e8e8; display: flex; align-items: center; justify-content: center; position: relative; }
.st span { writing-mode: vertical-rl; transform: rotate(180deg); letter-spacing: -0.300px; line-height: 20px; }
.st.on { margin-left: 0; width: 37px; background: #fdfdfd; border-right: 0; }
.st.on span { margin-right: 2px; }
.h1 { height: 39px; border-top: 0; align-items: flex-start; }
.h1 span { margin-top: -1px; }
.wave { position: absolute; left: 0; top: 0; }
.h2 { height: 148px; } .h3 { height: 111px; } .h4 { height: 142px; } .h5 { height: 126px; } .h6 { height: 111px; }
.tb { width: 35px; height: 23.500px; border: 1px solid #b8b8b8; border-radius: 3px; background: #fafafa; display: flex; align-items: center; justify-content: center; }
.dim { color: #808080; }
.tb.dim .ar { border-top-color: #aaa; }
.frame { width: 486px; margin-left: -3px; border: 1px solid #aaa; background: #fcfcfc; padding: 14px 14px 0 14px; }
.actions { display: flex; justify-content: space-between; height: 65px; }
.act { width: 90px; height: 65px; border: 1px solid #b5b5b5; border-radius: 3px; background: linear-gradient(#fefefe, #eee); display: flex; flex-direction: column; align-items: center; padding-top: 3px; font-size: 16.500px; }
.act span { margin-top: 4px; line-height: 22px; }
.act.dim { border-color: #ccc; }
.hgu { display: flex; align-items: center; height: 21px; margin: 11px 0 11px; color: #808080; gap: 8px; }
.hgu span { padding-top: 1px; }
.cb { width: 21px; height: 21px; border: 1px solid #c0c0c0; background: #f4f4f4; }
.field { display: flex; align-items: center; height: 28px; margin-bottom: 8px; }
.field > span { width: 130px; flex: none; padding-top: 1px; }
.field > .f-desa { letter-spacing: -0.750px; }
.combo { flex: 1; height: 28px; border: 1px solid #bdbdbd; border-radius: 3px; background: linear-gradient(#fdfdfd, #ececec); color: #808080; display: flex; align-items: center; justify-content: space-between; padding: 1px 10px 0 4px; letter-spacing: -0.250px; }
.c-kec { letter-spacing: 0; }
.c-desa { letter-spacing: 0.650px; }
.combo .ar { border-top-color: #999; }
.inp { border: 1px solid #aaa; border-radius: 3px; background: #efefef; color: #808080; display: flex; align-items: center; padding: 1px 3px 0; flex: 1; height: 31px; letter-spacing: -0.200px; }
.field.nomor { height: 31px; margin-bottom: 8px; }
.tahun { display: flex; align-items: center; height: 47px; margin-bottom: 10px; }
.tahun > span { width: 98px; padding-top: 1px; }
.tahun .inp { flex: none; width: 142px; margin-top: 1px; }
.cari { margin-left: auto; width: 163px; height: 49px; border: 1px solid #c4c4c4; border-radius: 3px; background: linear-gradient(#fdfdfd, #f0f0f0); color: #808080; display: flex; align-items: center; gap: 0; padding-left: 8px; }
.grid { height: 272px; border: 1px solid #b0b0b0; display: grid; grid-template: 249px 21px / 433px 21px; background: #fff; }
.gmain { overflow: hidden; }
.tr { height: 45px; display: flex; font-size: 17px; letter-spacing: 0.180px; }
.tr > * { border-right: 1px solid #c4c4c4; border-bottom: 1px solid #c4c4c4; flex: none; height: 45px; display: flex; align-items: center; padding: 3px 0 0 3px; }
.tr i { width: 27px; background: linear-gradient(#fcfcfc, #ebebeb); border-color: #aaa; font-size: 16px; }
.c1 { width: 69px; } .c2 { width: 150px; } .c3 { width: 150px; } .c4 { width: 37px; border-right: 0; }
.tr .c4 { letter-spacing: -0.200px; }
.tr.sel span { background: #0078d7; color: #fff; }
.tr.sel i { font-weight: bold; }
.tr.th { height: 31px; }
.tr.th b { height: 31px; background: linear-gradient(#fefefe, #ebebeb); border-bottom-color: #aaa; justify-content: center; font-size: 16.500px; padding: 2px 0 0; letter-spacing: -0.300px; }
.tr.th .c1 { width: 96px; padding-left: 27px; }
.grid .vbar { width: 21px; }
.grid .vbar s { height: 11px; }
.grid .vbar u { height: 42px; flex: none; }
.grid .vbar s.rest { flex: 1; border-bottom: 0; }
.hbar { display: flex; grid-column: 1 / 3; border-top: 1px solid #b8b8b8; background: #efefef; }
.hbar b { width: 21px; height: 20px; background: #fdfdfd; display: flex; align-items: center; justify-content: center; border-right: 1px solid #c4c4c4; }
.hbar u { width: 196px; height: 20px; background: linear-gradient(#fff, #f2f2f2); border-right: 1px solid #b8b8b8; }
.hbar s { width: 196px; height: 20px; background: #e4e4e4; border-right: 1px solid #b8b8b8; }
.pager { display: flex; gap: 9px; margin-top: 9px; }
.pager button { width: 50px; height: 30px; border: 1px solid #aaa; border-radius: 3px; background: linear-gradient(#fefefe, #eee); letter-spacing: 0; }
.pager .dim { border-color: #c4c4c4; }
.pager .inp { justify-content: center; height: 30px; letter-spacing: 0; }

/* status bar */
.status { height: 36px; display: flex; align-items: center; padding: 3px 0 0 4px; }
.status > * { flex: none; }
.locate { width: 291px; height: 30px; border: 1px solid #aaa; border-radius: 3px; background: #fff; color: #858585; display: flex; align-items: center; padding-left: 11px; gap: 7px; letter-spacing: -0.080px; }
.l-coord { margin-left: 536px; width: 80px; }
.box { height: 30px; border: 1px solid #aaa; border-radius: 3px; background: #fff; display: flex; align-items: center; justify-content: space-between; letter-spacing: -0.400px; }
.coord { width: 145px; padding-left: 10px; }
.i-toggle { margin-left: 5px; }
.l-scale { margin-left: 13px; width: 39px; }
.scale { width: 114px; height: 28px; padding-left: 4px; }
.scale b { width: 30px; height: 26px; border-left: 1px solid #d5d5d5; background: linear-gradient(#fefefe, #eee); display: flex; align-items: center; justify-content: center; }
.i-lock { margin-left: 12px; }
.l-mag { margin-left: 9px; width: 68px; letter-spacing: -0.750px; }
.spin { padding-left: 5px; }
.spin b { width: 21px; height: 28px; border-left: 1px solid #bbb; background: #fafafa; display: flex; flex-direction: column; align-items: center; justify-content: center; gap: 6px; }
.spin.m { width: 108px; }
.l-rot { margin-left: 10px; width: 68px; }
.spin.r { width: 101px; }
.status .chk { margin-left: 6px; }
.l-ren { margin-left: 8px; width: 64px; }
.i-globe { margin-left: 1px; }
.l-epsg { margin-left: 2px; width: 111px; letter-spacing: 0; }
.msg { width: 32px; height: 30px; border: 1px solid #aaa; border-radius: 3px; background: #dcdcdc; display: flex; align-items: center; justify-content: center; }

/* numbered callouts */
.notes { position: absolute; left: 0; top: 0; z-index: 5; pointer-events: none; }
.num text { font: bold 29px "Liberation Sans", Arial, sans-serif; fill: #fff; text-anchor: middle; letter-spacing: 0; }
```
